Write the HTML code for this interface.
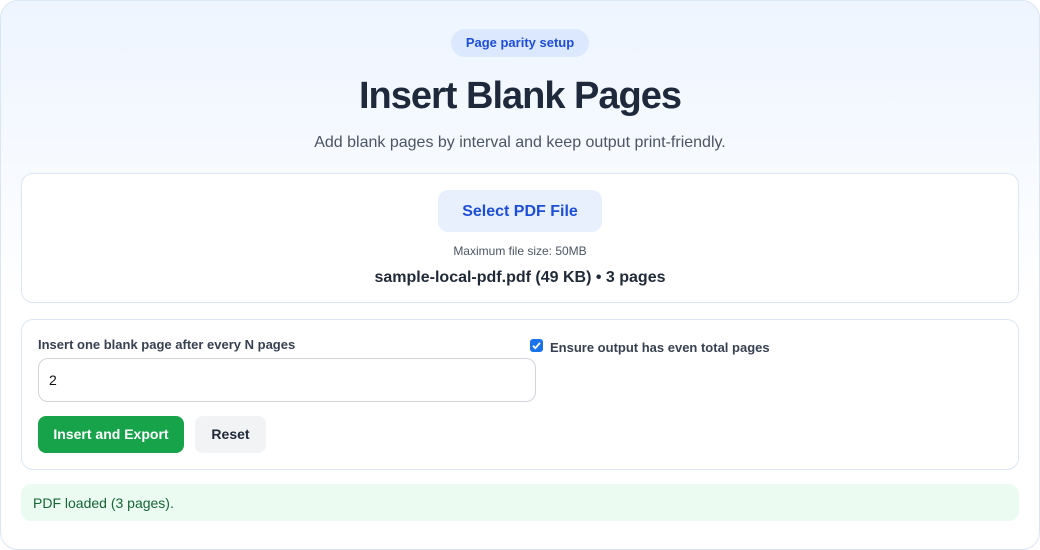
<!DOCTYPE html>
<html><head><style>
*{box-sizing:border-box;margin:0;padding:0}
body{width:1040px;height:550px;background:#fff;font-family:"Liberation Sans",sans-serif;color:#1f2937;position:relative;overflow:hidden}
.outer{position:absolute;left:0;top:0;width:1040px;height:550px;border:1px solid #dbe6f5;border-radius:18px;background:linear-gradient(#eef5ff 0,#f7faff 170px,#fff 300px)}
.pill{position:absolute;left:451px;top:29px;width:138px;height:28px;border-radius:14px;background:#dbe8fe;color:#1d4ed8;font-weight:bold;font-size:13px;text-align:center;line-height:28px}
h1{position:absolute;left:0;width:1040px;top:72px;text-align:center;font-size:38px;font-weight:bold;color:#1e293b;letter-spacing:-1px;line-height:48px}
.sub{position:absolute;left:0;width:1040px;top:134px;text-align:center;font-size:16px;color:#4b5563}
.card{position:absolute;background:#fff;border:1px solid #dbe6f5;border-radius:12px}
.sel{position:absolute;left:438px;top:190px;width:164px;height:42px;border-radius:10px;background:#e8f0fe;color:#1d4ed8;font-weight:bold;font-size:16px;text-align:center;line-height:44px}
.max{position:absolute;left:0;width:1040px;top:244px;text-align:center;font-size:12px;color:#4b5563}
.file{position:absolute;left:0;width:1040px;top:269px;text-align:center;font-size:16px;font-weight:bold;color:#1f2937}
.lbl{position:absolute;left:38px;top:337px;font-size:13px;font-weight:bold;color:#374151}
.inp{position:absolute;left:38px;top:358px;width:498px;height:44px;border:1px solid #d1d5db;border-radius:10px;background:#fff;font-size:14px;padding:13px 10px;color:#111}
.chk{position:absolute;left:530px;top:339px;width:13px;height:13px;border-radius:3px;background:#1a73e8}
.chkl{position:absolute;left:550px;top:340px;font-size:13px;font-weight:bold;color:#374151}
.b1{position:absolute;left:38px;top:416px;width:146px;height:37px;border-radius:8px;background:#16a34a;color:#fff;font-weight:bold;font-size:14px;text-align:center;line-height:37px}
.b2{position:absolute;left:195px;top:416px;width:71px;height:37px;border-radius:8px;background:#f1f3f5;color:#1f2937;font-weight:bold;font-size:14px;text-align:center;line-height:37px}
.status{position:absolute;left:21px;top:484px;width:998px;height:37px;border-radius:10px;background:#ebfbf2;color:#166534;font-size:14px;line-height:38px;padding-left:12px}
</style></head><body>
<div class="outer"></div>
<div class="pill">Page parity setup</div>
<h1>Insert Blank Pages</h1>
<div class="sub">Add blank pages by interval and keep output print-friendly.</div>
<div class="card" style="left:21px;top:173px;width:998px;height:130px"></div>
<div class="sel">Select PDF File</div>
<div class="max">Maximum file size: 50MB</div>
<div class="file">sample-local-pdf.pdf (49 KB) • 3 pages</div>
<div class="card" style="left:21px;top:319px;width:998px;height:151px"></div>
<div class="lbl">Insert one blank page after every N pages</div>
<div class="inp">2</div>
<div class="chk"><svg width="13" height="13" viewBox="0 0 13 13"><path d="M3 6.8l2.3 2.4L10 3.8" stroke="#fff" stroke-width="1.8" fill="none"/></svg></div>
<div class="chkl">Ensure output has even total pages</div>
<div class="b1">Insert and Export</div>
<div class="b2">Reset</div>
<div class="status">PDF loaded (3 pages).</div>
</body></html>
